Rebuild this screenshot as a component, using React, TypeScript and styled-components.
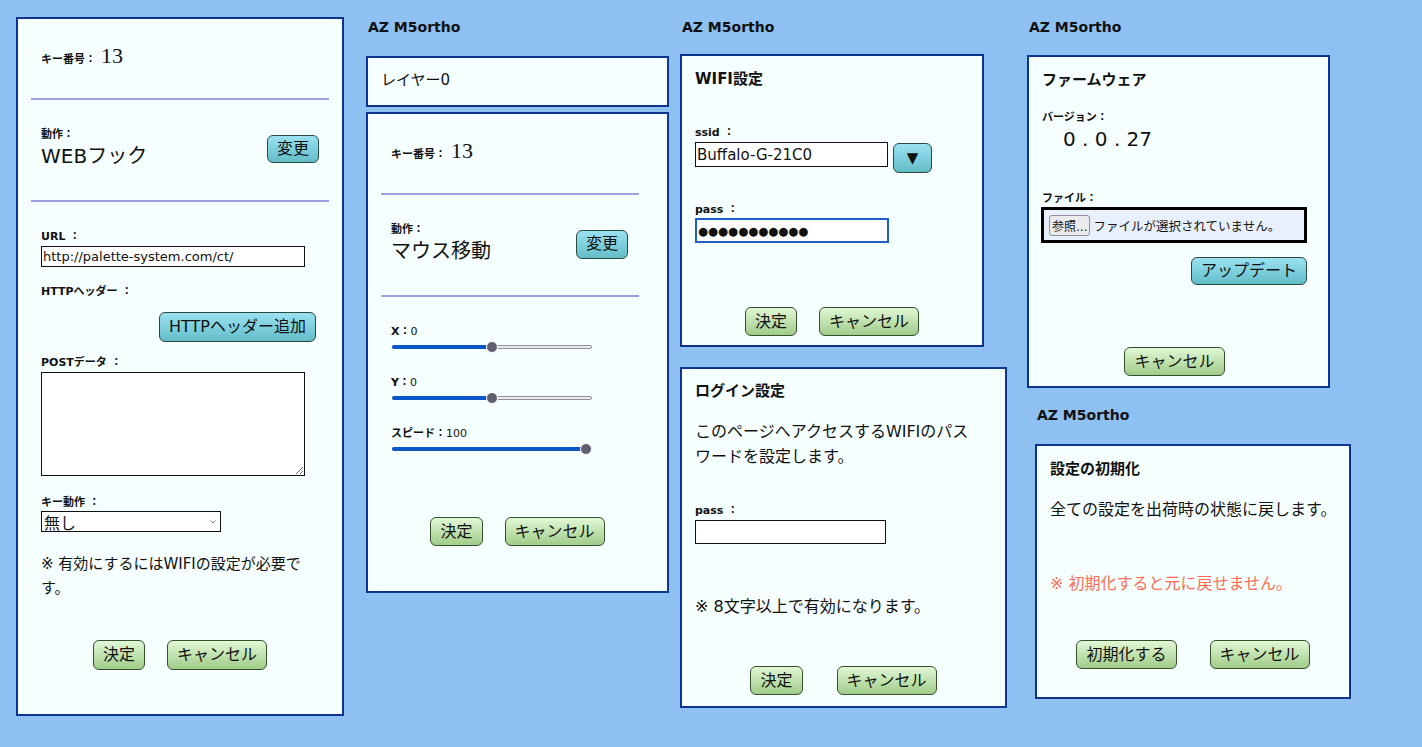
import React from "react";
import styled, { createGlobalStyle } from "styled-components";

const FONT = `"DejaVu Sans", "Noto Sans CJK JP", sans-serif`;

const Global = createGlobalStyle`
  html, body { margin: 0; padding: 0; }
  body {
    background: #8fc0f2;
    font-family: ${FONT};
    color: #111;
    width: 1422px;
    height: 747px;
    overflow: hidden;
  }
  * { box-sizing: border-box; }
`;

const Page = styled.div`
  display: flex;
  align-items: flex-start;
  width: 1422px;
  height: 747px;
`;

const Column = styled.div<{ $ml: number; $mt?: number; $w: number }>`
  flex: none;
  display: flex;
  flex-direction: column;
  align-items: flex-start;
  width: ${(p) => p.$w}px;
  margin-left: ${(p) => p.$ml}px;
  margin-top: ${(p) => p.$mt ?? 0}px;
`;

const Title = styled.div<{ $mt?: number; $mb?: number; $ml?: number }>`
  font-weight: 700;
  font-size: 14px;
  line-height: 16px;
  color: #111;
  margin: ${(p) => p.$mt ?? 19}px 0 ${(p) => p.$mb ?? 20}px ${(p) => p.$ml ?? 2}px;
`;

const Panel = styled.div<{ $w: number; $h: number; $pr?: number; $ml?: number; $mt?: number }>`
  flex: none;
  width: ${(p) => p.$w}px;
  height: ${(p) => p.$h}px;
  margin: ${(p) => p.$mt ?? 0}px 0 0 ${(p) => p.$ml ?? 0}px;
  padding: 0 ${(p) => p.$pr ?? 13}px 0 13px;
  border: 2px solid #0d348f;
  background: #f5ffff;
  display: flex;
  flex-direction: column;
  align-items: stretch;
`;

const Heading = styled.div<{ $mt: number }>`
  margin-top: ${(p) => p.$mt}px;
  font-weight: 700;
  font-size: 15px;
  line-height: 20px;
  height: 20px;
`;

const Label = styled.div<{ $mt?: number }>`
  margin-top: ${(p) => p.$mt ?? 0}px;
  font-weight: 700;
  font-size: 11px;
  line-height: 14px;
  height: 14px;
  white-space: pre;
`;

const KeyRow = styled.div<{ $mt: number }>`
  display: flex;
  align-items: baseline;
  height: 22px;
  padding-left: 10px;
  margin-top: ${(p) => p.$mt}px;
`;

const KeyLabel = styled.span`
  font-weight: 700;
  font-size: 11px;
  line-height: 14px;
`;

const KeyNo = styled.span`
  font-family: "Liberation Serif", "DejaVu Serif", serif;
  font-size: 22px;
  line-height: 22px;
  margin-left: 5px;
`;

const Rule = styled.div<{ $mt: number; $mr?: number }>`
  height: 2px;
  background: #9e9ee2;
  margin-top: ${(p) => p.$mt}px;
  margin-right: ${(p) => p.$mr ?? 0}px;
`;

const ActionRow = styled.div<{ $mt: number; $pr: number }>`
  display: flex;
  align-items: center;
  justify-content: space-between;
  margin-top: ${(p) => p.$mt}px;
  padding: 0 ${(p) => p.$pr}px 0 10px;
`;

const ActionInfo = styled.div`
  display: flex;
  flex-direction: column;
`;

const ActionValue = styled.div`
  font-size: 20px;
  line-height: 28px;
  height: 28px;
`;

const Inset = styled.div<{ $mt?: number }>`
  display: flex;
  flex-direction: column;
  align-items: flex-start;
  padding: 0 10px;
  margin-top: ${(p) => p.$mt ?? 0}px;
`;

const Btn = styled.button<{ $tone?: "green" | "cyan"; $h?: number; $mt?: number; $mr?: number }>`
  flex: none;
  height: ${(p) => p.$h ?? 29}px;
  margin-top: ${(p) => p.$mt ?? 0}px;
  margin-right: ${(p) => p.$mr ?? 0}px;
  padding: 0 9px;
  font-family: ${FONT};
  font-size: 16px;
  line-height: 1;
  color: #111;
  border-radius: 6px;
  border: 1px solid ${(p) => (p.$tone === "cyan" ? "#2a4b40" : "#34502c")};
  background: ${(p) =>
    p.$tone === "cyan"
      ? "linear-gradient(#9be1f2, #62bdc8)"
      : "linear-gradient(#e1f8d6, #a0cc88)"};
  display: inline-flex;
  align-items: center;
  justify-content: center;
  align-self: ${(p) => (p.$mr !== undefined ? "flex-end" : "auto")};
`;

const ButtonRow = styled.div<{ $mt: number; $gap?: number }>`
  display: flex;
  justify-content: center;
  gap: ${(p) => p.$gap ?? 22}px;
  margin-top: ${(p) => p.$mt}px;
`;

const Field = styled.input<{ $w: number; $h: number; $fs: number; $mt?: number; $focus?: boolean }>`
  flex: none;
  width: ${(p) => p.$w}px;
  height: ${(p) => p.$h}px;
  margin-top: ${(p) => p.$mt ?? 0}px;
  padding: 0 1px;
  border: ${(p) => (p.$focus ? "2px solid #1d5fc4" : "1px solid #111")};
  border-radius: 0;
  background: #fff;
  font-family: ${FONT};
  font-size: ${(p) => p.$fs}px;
  color: #111;
  outline: none;
`;

const Area = styled.textarea<{ $mt: number }>`
  width: 264px;
  height: 104px;
  margin: ${(p) => p.$mt}px 0 0 0;
  border: 1px solid #111;
  border-radius: 0;
  background: #fff;
  font-family: ${FONT};
  resize: both;
  outline: none;
`;

const SelectBox = styled.div<{ $mt: number }>`
  display: flex;
  align-items: center;
  justify-content: space-between;
  width: 180px;
  height: 21px;
  margin-top: ${(p) => p.$mt}px;
  padding: 0 4px 0 2px;
  border: 1px solid #111;
  background: #fff;
  font-size: 16px;
`;

const Text = styled.div<{ $mt: number; $fs?: number; $lh?: number; $mw?: number; $color?: string; $nowrap?: boolean }>`
  margin-top: ${(p) => p.$mt}px;
  font-size: ${(p) => p.$fs ?? 16}px;
  line-height: ${(p) => p.$lh ?? 25}px;
  max-width: ${(p) => (p.$mw ? `${p.$mw}px` : "none")};
  color: ${(p) => p.$color ?? "#111"};
  white-space: ${(p) => (p.$nowrap ? "nowrap" : "normal")};
`;

const InputRow = styled.div<{ $mt: number }>`
  display: flex;
  align-items: flex-start;
  margin-top: ${(p) => p.$mt}px;
`;

const DropBtn = styled(Btn)`
  width: 39px;
  height: 30px;
  margin: 1px 0 0 5px;
  font-size: 15px;
  padding: 0;
`;

const SliderLabel = styled.div<{ $mt: number }>`
  margin-top: ${(p) => p.$mt}px;
  font-size: 11px;
  line-height: 14px;
  height: 14px;
  & b { font-weight: 700; }
`;

const Slider = styled.div`
  position: relative;
  width: 200px;
  height: 14px;
  margin: 1px 0 0 1px;
`;

const Rail = styled.div`
  position: absolute;
  left: 0;
  right: 0;
  top: 5px;
  height: 4px;
  border: 1px solid #8f8f9d;
  border-radius: 2px;
  background: #e9e9ee;
`;

const Fill = styled.div`
  position: absolute;
  left: 0;
  top: 5px;
  height: 4px;
  border-radius: 2px;
  background: #0b57c8;
`;

const Thumb = styled.div`
  position: absolute;
  top: 1px;
  width: 12px;
  height: 12px;
  margin-left: -6px;
  border-radius: 50%;
  background: #5f5f6d;
  border: 1.5px solid #fff;
`;

const Version = styled.div<{ $mt: number }>`
  margin-top: ${(p) => p.$mt}px;
  padding-left: 21px;
  font-size: 20px;
  line-height: 24px;
  white-space: pre;
`;

const FileBox = styled.div<{ $mt: number }>`
  display: flex;
  align-items: center;
  width: 266px;
  height: 36px;
  margin: ${(p) => p.$mt}px 0 0 -1px;
  padding-left: 5px;
  border: 3px solid #000;
  background: #e8f0fd;
  gap: 3px;
`;

const FileBtn = styled.button`
  height: 21px;
  padding: 0 2px;
  font-family: ${FONT};
  font-size: 12px;
  color: #111;
  background: #ececef;
  border: 1px solid #8f8f9d;
  border-radius: 3px;
`;

const FileText = styled.span`
  font-size: 12.5px;
  white-space: nowrap;
`;

const LayerText = styled.div`
  margin-top: 12px;
  font-size: 15px;
  line-height: 20px;
`;

type SliderSpec = { name: string; value: number; min: number; max: number; mt: number };

const sliders: SliderSpec[] = [
  { name: "X：", value: 0, min: -100, max: 100, mt: 28 },
  { name: "Y：", value: 0, min: -100, max: 100, mt: 22 },
  { name: "スピード：", value: 100, min: 0, max: 100, mt: 22 },
];

function RangeSlider({ spec }: { spec: SliderSpec }) {
  const ratio = (spec.value - spec.min) / (spec.max - spec.min);
  const pos = 6 + ratio * (200 - 12);
  return (
    <>
      <SliderLabel $mt={spec.mt}>
        <b>{spec.name}</b>
        {spec.value}
      </SliderLabel>
      <Slider>
        <Rail />
        <Fill style={{ width: `${pos}px` }} />
        <Thumb style={{ left: `${pos}px` }} />
      </Slider>
    </>
  );
}

function Chevron() {
  return (
    <svg width="6" height="4" viewBox="0 0 6 4">
      <polyline points="0.5,0.5 3,3 5.5,0.5" fill="none" stroke="#777" strokeWidth="1" />
    </svg>
  );
}

export default function App() {
  return (
    <>
      <Global />
      <Page>
        <Column $ml={16} $mt={17} $w={328}>
          <Panel $w={328} $h={699}>
            <KeyRow $mt={26}>
              <KeyLabel>キー番号：</KeyLabel>
              <KeyNo>13</KeyNo>
            </KeyRow>
            <Rule $mt={31} />
            <ActionRow $mt={28} $pr={10}>
              <ActionInfo>
                <Label>動作：</Label>
                <ActionValue>WEBフック</ActionValue>
              </ActionInfo>
              <Btn $tone="cyan" $h={28}>変更</Btn>
            </ActionRow>
            <Rule $mt={30} />
            <Inset>
              <Label $mt={28}>URL ：</Label>
              <Field $w={264} $h={21} $fs={13} $mt={2} readOnly value="http://palette-system.com/ct/" />
              <Label $mt={18}>HTTPヘッダー ：</Label>
              <Btn $tone="cyan" $h={30} $mt={13} $mr={3}>HTTPヘッダー追加</Btn>
              <Label $mt={14}>POSTデータ ：</Label>
              <Area $mt={2} readOnly value="" />
              <Label $mt={20}>キー動作 ：</Label>
              <SelectBox $mt={1}>
                <span>無し</span>
                <Chevron />
              </SelectBox>
              <Text $mt={20} $fs={15} $lh={24} $mw={275}>
                ※ 有効にするにはWIFIの設定が必要です。
              </Text>
            </Inset>
            <ButtonRow $mt={40}>
              <Btn $h={30}>決定</Btn>
              <Btn $h={30}>キャンセル</Btn>
            </ButtonRow>
          </Panel>
        </Column>

        <Column $ml={22} $w={303}>
          <Title $mb={21}>AZ M5ortho</Title>
          <Panel $w={303} $h={51}>
            <LayerText>レイヤー0</LayerText>
          </Panel>
          <Panel $w={303} $h={481} $mt={5}>
            <KeyRow $mt={26}>
              <KeyLabel>キー番号：</KeyLabel>
              <KeyNo>13</KeyNo>
            </KeyRow>
            <Rule $mt={31} $mr={15} />
            <ActionRow $mt={28} $pr={26}>
              <ActionInfo>
                <Label>動作：</Label>
                <ActionValue>マウス移動</ActionValue>
              </ActionInfo>
              <Btn $tone="cyan" $h={29}>変更</Btn>
            </ActionRow>
            <Rule $mt={30} $mr={15} />
            <Inset>
              {sliders.map((s) => (
                <RangeSlider key={s.name} spec={s} />
              ))}
            </Inset>
            <ButtonRow $mt={61}>
              <Btn>決定</Btn>
              <Btn>キャンセル</Btn>
            </ButtonRow>
          </Panel>
        </Column>

        <Column $ml={11} $w={327}>
          <Title $mb={19}>AZ M5ortho</Title>
          <Panel $w={304} $h={293}>
            <Heading $mt={13}>WIFI設定</Heading>
            <Label $mt={37}>ssid ：</Label>
            <InputRow $mt={2}>
              <Field $w={193} $h={25} $fs={15} readOnly value="Buffalo-G-21C0" />
              <DropBtn $tone="cyan">▼</DropBtn>
            </InputRow>
            <Label $mt={30}>pass ：</Label>
            <Field $w={194} $h={25} $fs={11.5} $mt={1} $focus readOnly value="●●●●●●●●●●●" />
            <ButtonRow $mt={64}>
              <Btn>決定</Btn>
              <Btn>キャンセル</Btn>
            </ButtonRow>
          </Panel>
          <Panel $w={327} $h={341} $mt={20}>
            <Heading $mt={12}>ログイン設定</Heading>
            <Text $mt={18} $mw={285}>
              このページへアクセスするWIFIのパスワードを設定します。
            </Text>
            <Label $mt={35}>pass ：</Label>
            <Field $w={191} $h={24} $fs={15} $mt={2} readOnly value="" />
            <Text $mt={50}>※ 8文字以上で有効になります。</Text>
            <ButtonRow $mt={47} $gap={34}>
              <Btn>決定</Btn>
              <Btn>キャンセル</Btn>
            </ButtonRow>
          </Panel>
        </Column>

        <Column $ml={20} $w={324}>
          <Title $mb={20}>AZ M5ortho</Title>
          <Panel $w={303} $h={333} $pr={21}>
            <Heading $mt={13}>ファームウェア</Heading>
            <Label $mt={21}>バージョン：</Label>
            <Version $mt={2}>0 . 0 . 27</Version>
            <Label $mt={41}>ファイル：</Label>
            <FileBox $mt={1}>
              <FileBtn>参照...</FileBtn>
              <FileText>ファイルが選択されていません。</FileText>
            </FileBox>
            <Btn $tone="cyan" $h={28} $mt={14} $mr={0}>アップデート</Btn>
            <ButtonRow $mt={62}>
              <Btn>キャンセル</Btn>
            </ButtonRow>
          </Panel>
          <Title $mt={19} $mb={21} $ml={10}>AZ M5ortho</Title>
          <Panel $w={316} $h={255} $ml={8}>
            <Heading $mt={13}>設定の初期化</Heading>
            <Text $mt={18} $nowrap>全ての設定を出荷時の状態に戻します。</Text>
            <Text $mt={49} $color="#ff6c55">※ 初期化すると元に戻せません。</Text>
            <ButtonRow $mt={44} $gap={33}>
              <Btn>初期化する</Btn>
              <Btn>キャンセル</Btn>
            </ButtonRow>
          </Panel>
        </Column>
      </Page>
    </>
  );
}
